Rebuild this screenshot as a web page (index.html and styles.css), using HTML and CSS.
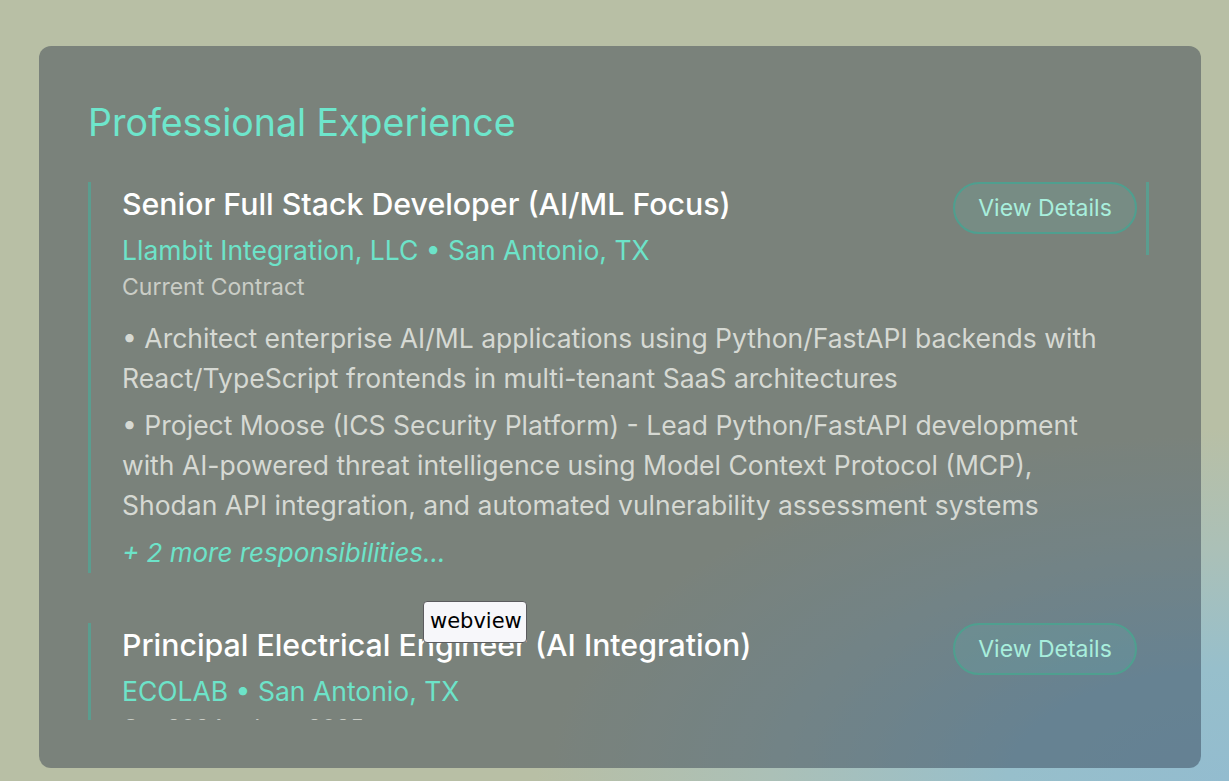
FILE: index.html
```html
<!DOCTYPE html>
<html lang="en">
<head>
<meta charset="utf-8">
<title>Professional Experience</title>
<link rel="stylesheet" href="styles.css">
</head>
<body>
<div class="page">
  <section class="card">
    <h2 class="section-title">Professional Experience</h2>
    <div class="scroll">
      <div class="scroll-thumb"></div>
      <article class="entry">
        <div class="entry-head">
          <div class="entry-info">
            <h3 class="job-title">Senior Full Stack Developer (AI/ML Focus)</h3>
            <div class="company">Llambit Integration, LLC • San Antonio, TX</div>
            <div class="dates">Current Contract</div>
          </div>
          <button class="details-btn">View Details</button>
        </div>
        <ul class="duties">
          <li>• Architect enterprise AI/ML applications using Python/FastAPI backends with React/TypeScript frontends in multi-tenant SaaS architectures</li>
          <li>• Project Moose (ICS Security Platform) - Lead Python/FastAPI development with AI-powered threat intelligence using Model Context Protocol (MCP), Shodan API integration, and automated vulnerability assessment systems</li>
        </ul>
        <div class="more">+ 2 more responsibilities...</div>
      </article>
      <article class="entry">
        <div class="entry-head">
          <div class="entry-info">
            <h3 class="job-title">Principal Electrical Engineer (AI Integration)</h3>
            <div class="company">ECOLAB • San Antonio, TX</div>
            <div class="dates">Oct 2024 - June 2025</div>
          </div>
          <button class="details-btn">View Details</button>
        </div>
        <ul class="duties">
          <li>• Led AI integration initiatives for industrial electrical systems</li>
        </ul>
      </article>
    </div>
    <div class="tooltip">webview</div>
  </section>
</div>
</body>
</html>
```

FILE: styles.css
```css
* { box-sizing: border-box; }

html, body {
  margin: 0;
  height: 100%;
}

body {
  font-family: Inter, "Noto Sans", sans-serif;
  background:
    radial-gradient(ellipse 60% 48% at 100% 100%, #93bccf 0%, #97bfcb 30%, #abc0b7 62%, rgba(184, 191, 166, 0) 94%),
    #b8bfa5;
  overflow: hidden;
}

.page {
  height: 781px;
  padding: 46px 28px 13px 39px;
  display: flex;
}

.card {
  position: relative;
  flex: 1;
  display: flex;
  flex-direction: column;
  border-radius: 12px;
  background: rgba(30, 41, 59, 0.4);
  padding: 54px 49px 48px 49px;
  min-height: 0;
}

.section-title {
  margin: 0 0 37px 0;
  font-size: 37.5px;
  line-height: 45px;
  font-weight: 400;
  color: #6ee6cc;
}

.scroll {
  position: relative;
  flex: 1;
  min-height: 0;
  overflow: hidden;
  padding-right: 9px;
}

.scroll-thumb {
  position: absolute;
  top: 0;
  right: 3px;
  width: 3px;
  height: 73px;
  background: #5b9d8f;
}

.entry {
  border-left: 3px solid #5b9d8f;
  padding: 0 6px 2px 31px;
  margin-bottom: 50px;
}

.entry-head {
  display: flex;
  justify-content: space-between;
  align-items: flex-start;
  gap: 20px;
}

.job-title {
  margin: 0;
  font-size: 30.3px;
  line-height: 44px;
  font-weight: 500;
  color: #ffffff;
}

.company {
  margin-top: 6px;
  font-size: 26.5px;
  line-height: 36px;
  color: #6de3c9;
}

.dates {
  margin-top: 4px;
  font-size: 23px;
  line-height: 30px;
  color: #cacdc6;
}

.details-btn {
  flex: none;
  width: 184px;
  height: 52px;
  border: 2px solid #4f9f8f;
  border-radius: 26px;
  background: rgba(94, 234, 212, 0.1);
  color: #a8eedc;
  font-family: inherit;
  font-size: 23px;
  padding: 0;
}

.duties {
  list-style: none;
  margin: 16px 0 0 0;
  padding: 0;
  max-width: 1000px;
}

.duties li {
  font-size: 26.5px;
  line-height: 40px;
  color: #d6d9d3;
  margin-bottom: 7px;
}

.more {
  margin-top: 10px;
  font-size: 26px;
  line-height: 36px;
  font-style: italic;
  color: #6de3c9;
}

.tooltip {
  position: absolute;
  left: 384px;
  top: 555px;
  width: 104px;
  height: 42px;
  padding: 5px 6px;
  background: #f7f7fa;
  border: 1px solid #5b5b5e;
  border-radius: 4px;
  font-family: "DejaVu Sans", sans-serif;
  font-size: 21px;
  line-height: 28px;
  color: #000;
}
```
